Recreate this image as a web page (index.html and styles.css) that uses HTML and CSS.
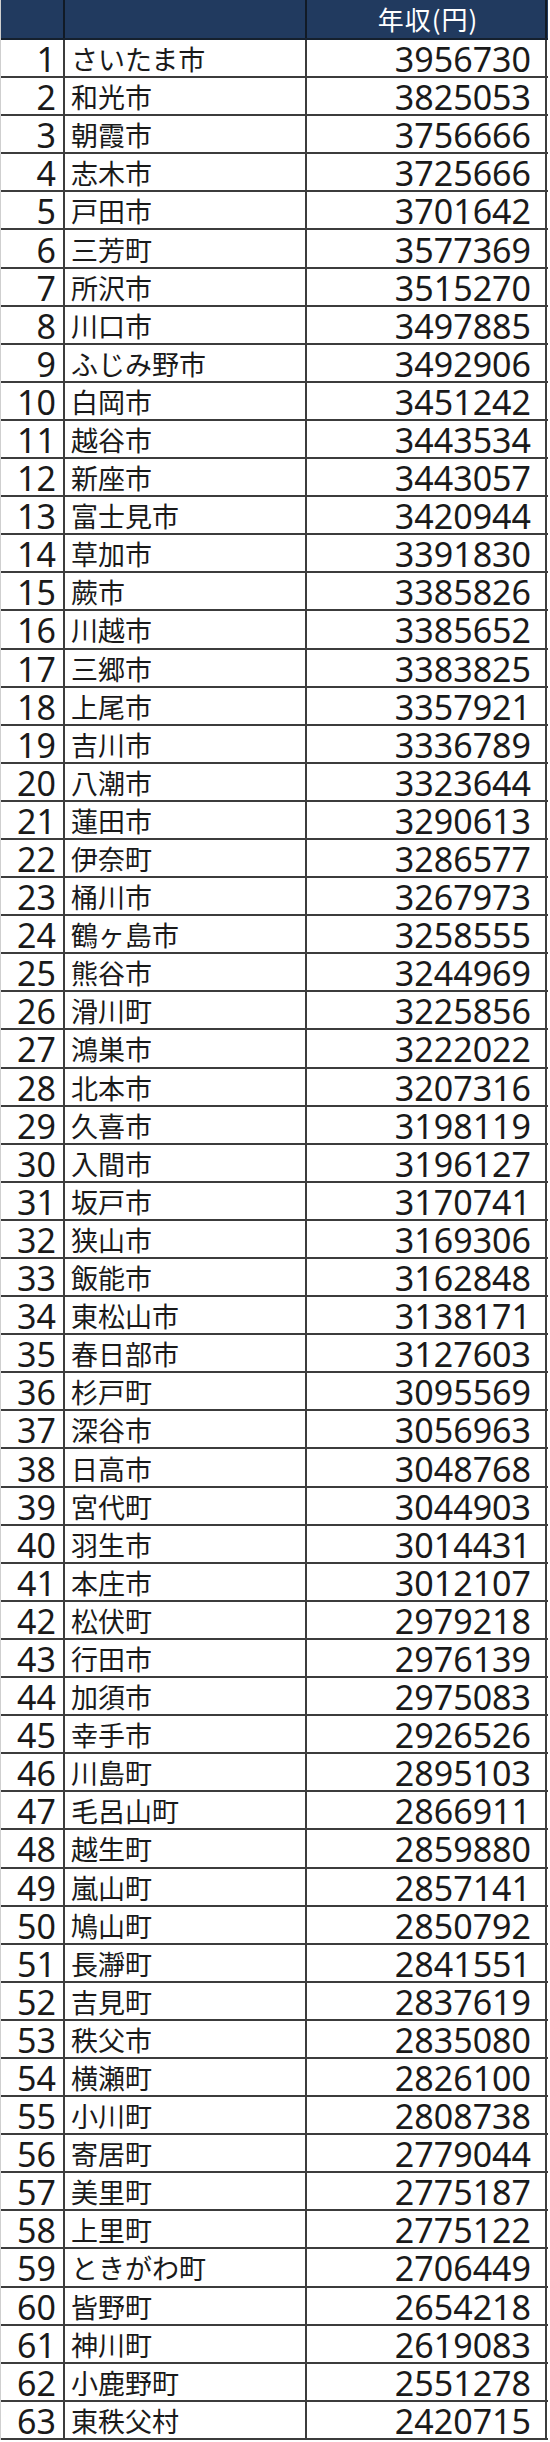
FILE: index.html
```html
<!DOCTYPE html>
<html lang="ja">
<head>
<meta charset="utf-8">
<link rel="stylesheet" href="styles.css">
</head>
<body>
<div class="sheet">
  <div class="row head">
    <div class="cell"></div>
    <div class="cell"></div>
    <div class="cell title">年収(円)</div>
  </div>
  <div id="rows"></div>
</div>
<script src="app.js"></script>
</body>
</html>
```
FILE: styles.css
```css
html, body {
  margin: 0;
  padding: 0;
  background: #ffffff;
}
.sheet {
  width: 547px;
  border-left: 1px solid #cfcfcf;
}
.row {
  display: grid;
  grid-template-columns: 64px 242px 240px;
  height: 38.1px;
  box-sizing: border-box;
  border-bottom: 2px solid #3c3c3c;
}
.cell {
  border-right: 2px solid #3c3c3c;
  display: flex;
  align-items: center;
  white-space: nowrap;
  padding-top: 2px;
  box-sizing: border-box;
  color: #1a1a1a;
}
.head {
  height: 40px;
  background: #213a5f;
  border-bottom: 2px solid #15202e;
}
.head .cell {
  border-right-color: #111a26;
  padding-top: 0;
}
.title {
  justify-content: center;
  color: #ffffff;
  font-family: "Noto Sans CJK JP", sans-serif;
  font-size: 26px;
  line-height: 30px;
  letter-spacing: 1px;
  padding-left: 4px;
}
.rank {
  justify-content: flex-end;
  padding-right: 7px;
  font-family: "Noto Sans", sans-serif;
  font-size: 34px;
  line-height: 30px;
}
.name {
  justify-content: flex-start;
  padding-left: 6px;
  font-family: "Noto Sans CJK JP", sans-serif;
  font-size: 27px;
  line-height: 30px;
}
.num {
  justify-content: flex-end;
  padding-right: 14px;
  font-family: "Noto Sans", sans-serif;
  font-size: 34px;
  line-height: 30px;
}
```
FILE: app.js
```js
var data = [
["さいたま市",3956730],["和光市",3825053],["朝霞市",3756666],["志木市",3725666],
["戸田市",3701642],["三芳町",3577369],["所沢市",3515270],["川口市",3497885],
["ふじみ野市",3492906],["白岡市",3451242],["越谷市",3443534],["新座市",3443057],
["富士見市",3420944],["草加市",3391830],["蕨市",3385826],["川越市",3385652],
["三郷市",3383825],["上尾市",3357921],["吉川市",3336789],["八潮市",3323644],
["蓮田市",3290613],["伊奈町",3286577],["桶川市",3267973],["鶴ヶ島市",3258555],
["熊谷市",3244969],["滑川町",3225856],["鴻巣市",3222022],["北本市",3207316],
["久喜市",3198119],["入間市",3196127],["坂戸市",3170741],["狭山市",3169306],
["飯能市",3162848],["東松山市",3138171],["春日部市",3127603],["杉戸町",3095569],
["深谷市",3056963],["日高市",3048768],["宮代町",3044903],["羽生市",3014431],
["本庄市",3012107],["松伏町",2979218],["行田市",2976139],["加須市",2975083],
["幸手市",2926526],["川島町",2895103],["毛呂山町",2866911],["越生町",2859880],
["嵐山町",2857141],["鳩山町",2850792],["長瀞町",2841551],["吉見町",2837619],
["秩父市",2835080],["横瀬町",2826100],["小川町",2808738],["寄居町",2779044],
["美里町",2775187],["上里町",2775122],["ときがわ町",2706449],["皆野町",2654218],
["神川町",2619083],["小鹿野町",2551278],["東秩父村",2420715]
];
var box = document.getElementById("rows");
data.forEach(function (d, i) {
  var row = document.createElement("div");
  row.className = "row";
  var a = document.createElement("div");
  a.className = "cell rank";
  a.textContent = String(i + 1);
  var b = document.createElement("div");
  b.className = "cell name";
  b.textContent = d[0];
  var c = document.createElement("div");
  c.className = "cell num";
  c.textContent = String(d[1]);
  row.appendChild(a);
  row.appendChild(b);
  row.appendChild(c);
  box.appendChild(row);
});
```
